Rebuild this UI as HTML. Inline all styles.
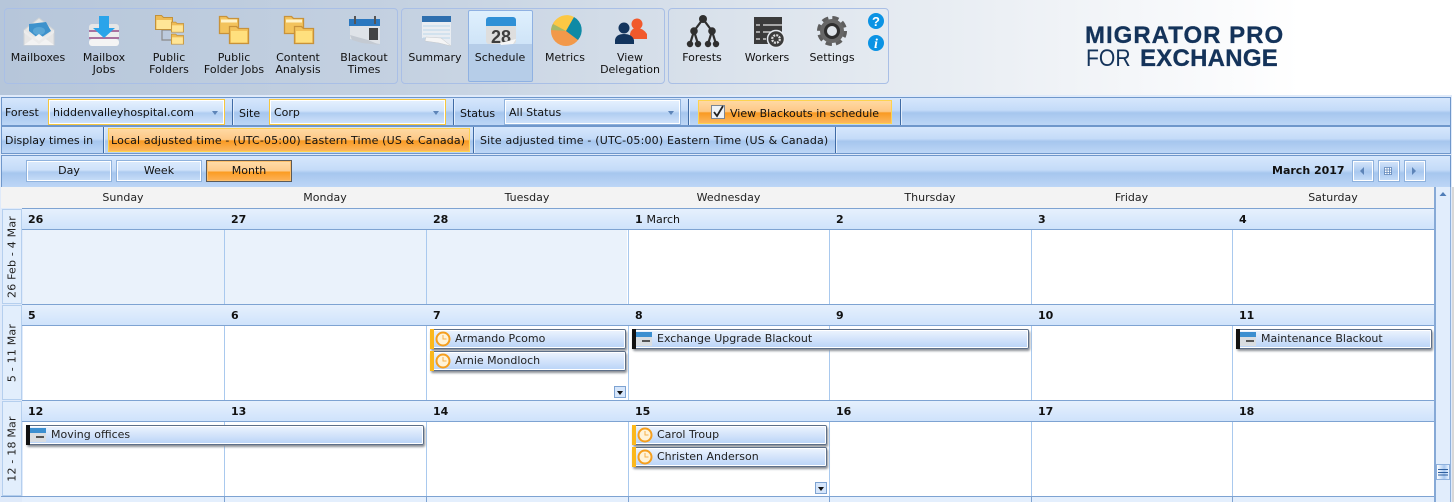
<!DOCTYPE html>
<html><head><meta charset="utf-8"><style>
html,body{margin:0;padding:0;width:1456px;height:502px;overflow:hidden;background:#fff}
body{position:relative;font:11px "DejaVu Sans","Liberation Sans",sans-serif;color:#111}
div,span{position:absolute;box-sizing:border-box;white-space:nowrap}
#hd{left:0;top:0;width:1456px;height:95px;background:linear-gradient(90deg,#b6c6da 0,#c4d1e1 400px,#dfe6ee 800px,#f4f6f9 1130px,#fff 1300px)}
.grp{top:8px;height:76px;border:1px solid #a9bfe6;border-radius:4px}
.l{text-align:center;line-height:12px;font-size:11px;color:#111;width:80px}
.tb{left:1px;width:1450px;border:1px solid #6f97cb;background:linear-gradient(#d6e7fc 0,#c4dbf8 45%,#a6c6ee 55%,#bdd6f6 100%)}
.sep{width:1px;background:#3f6ba5;box-shadow:1px 0 0 #e3eefc}
.t{line-height:13px;font-size:11px}
.cb{top:100px;height:24px;border:1px solid #fff;outline:1px solid #f6c73e;outline-offset:0;background:linear-gradient(#e4f0fe 0,#d0e3fa 45%,#b0cdf1 55%,#cfe2fa 100%);padding:5px 3px 3px;line-height:13px;font-size:11px}
.cb i{position:absolute;right:5px;top:10px;border:3px solid transparent;border-top:4px solid #5d84b8;border-bottom:0}
.or{background:linear-gradient(#ffd9a3 0,#fdc885 48%,#f99a22 54%,#fcb65c 100%);border:1px solid #fdd34f}
.btn{top:160px;width:86px;height:22px;text-align:center;line-height:20px;border:1px solid #8fb2dd;outline:1px solid #fff;outline-offset:-2px;background:linear-gradient(#dbeafd 0,#cfe2fa 45%,#aecbf0 55%,#c8def8 100%)}
.nb{top:160px;width:22px;height:22px;border:1px solid #8fb2dd;outline:1px solid #fff;outline-offset:-2px;background:linear-gradient(#d6e6fb,#a9c8ef 55%,#c8def8)}
.dn{top:187px;height:21px;text-align:center;line-height:22px;font-size:11px;background:#f3f3f3;color:#222}
.dh{height:22px;background:linear-gradient(#e6f0fd,#cfe3fb);border-top:1px solid #7ea3d2;border-bottom:1px solid #7ea3d2;font-weight:bold;padding:4px 0 0 6px;line-height:14px;font-size:11px;color:#111}
.dh b{font-weight:normal}
.vl{width:1px;background:#a9c9ee}
.hl{height:1px;background:#7ea3d2}
.wk{left:2px;width:20px;height:95px;background:#e2eefc;border:1px solid #b5cfee}
.wk span{left:50%;top:50%;transform:translate(-50%,-50%) rotate(-90deg);font-size:11px;color:#222;letter-spacing:.2px}
.ev{height:20px;border:1px solid #5d6f88;border-radius:2px;background:linear-gradient(#edf4fe,#b9d3f7);box-shadow:1px 2px 2px #8b8f96;outline:1px solid #fff;outline-offset:-2px;line-height:17px;font-size:11px;color:#222}
.ev u{position:absolute;left:-1px;top:-1px;bottom:-1px;width:4px;text-decoration:none}
.ev span{left:24px;top:0}
.ev svg{position:absolute;left:3px;top:1px}
.ev.c svg{left:4px}
.mr{width:12px;height:12px;border:1px solid #7ea3d2;background:#d6e6fb}
.mr i{position:absolute;left:2px;top:4px;border:3px solid transparent;border-top:4px solid #111;border-bottom:0}
.lg{color:#14335a;font-family:"Liberation Sans",sans-serif;font-size:24px;line-height:25px}
</style></head><body>
<div id="hd"></div>
<div class="grp" style="left:4px;width:394px"></div>
<div class="grp" style="left:401px;width:264px"></div>
<div class="grp" style="left:668px;width:221px"></div>
<div style="left:468px;top:10px;width:65px;height:72px;border:1px solid #8fb1e2;border-radius:2px;background:linear-gradient(#dff0fd 0,#cfe4f8 47%,#b6cde8 47%,#b6cde8 100%)"></div>

<svg style="position:absolute;left:0;top:0" width="900" height="95" viewBox="0 0 900 95">
<defs>
<g id="f"><path d="M.5 1.500h6l2 2h9v12H.5z" fill="#eebb55" stroke="#c2913a"/><path d="M1.500 6h15v9h-15z" fill="#ffe596"/></g>
<g id="F2"><path d="M.5 2.500h7l2 2h10v15H.5z" fill="#f3c35c" stroke="#c8923a" stroke-width="1.300"/><path d="M2 5.500h16v3H2z" fill="#fff3c8"/><path d="M10.500 12.500h7l2 2h10v15h-19z" fill="#f3c35c" stroke="#c8923a" stroke-width="1.300"/><path d="M12 17h16v11.500H12z" fill="#ffe07e"/></g>
</defs>
<!-- mailbox -->
<path d="M24 30 39 18l15 12v15H24z" fill="#e6e6e6" stroke="#cfd3d6"/><path d="M29 24l17-2 5 9-12 8-10-8z" fill="#3e92cc"/><ellipse cx="39" cy="31" rx="6" ry="4" fill="#5aa6d6"/><path d="M24 45l15-11 15 11z" fill="#f3f3f3"/><path d="M24 30l15 11 15-11v3L39 44 24 33z" fill="#ececec"/>
<!-- jobs -->
<rect x="89" y="24" width="30" height="8" rx="3" fill="#e6e6e6"/><rect x="89" y="30" width="30" height="2" fill="#a9719f"/><rect x="89" y="32" width="30" height="7" fill="#ededed"/><rect x="89" y="37" width="30" height="2" fill="#a9719f"/><rect x="89" y="39" width="30" height="7" rx="3" fill="#f4f4f4"/>
<path d="M99 16h10v12h6l-11 10-11-10h6z" fill="#2aa4ea"/>
<!-- public folders -->
<path d="M162 26v14h10M162 30h10" fill="none" stroke="#8a8a8a" stroke-width="1.200"/>
<use href="#f" transform="translate(155 14)"/><use href="#f" transform="translate(171 21) scale(.72)"/><use href="#f" transform="translate(171 33) scale(.72)"/>
<!-- folders -->
<use href="#F2" transform="translate(219 14)"/><use href="#F2" transform="translate(284 14)"/>
<!-- blackout -->
<path d="M350 20h30v24l-12-2-18-3z" fill="#dfe3e8"/><path d="M350 35l18 5 12 5-18-2-10-3z" fill="#c4cad2"/><rect x="349" y="19" width="31" height="7" fill="#2b78bf"/><rect x="369" y="28" width="9" height="12" fill="#444"/><rect x="354" y="16" width="2" height="8" fill="#555"/><rect x="374" y="16" width="2" height="8" fill="#555"/>
<!-- summary -->
<path d="M422 16h29v30l-10-5-14-2-5-1z" fill="#e9edf2"/><rect x="422" y="16" width="29" height="6" fill="#2f6fae"/><g stroke="#bcd6ea"><path d="M423 26h27M423 30h27M423 34h27M423 38h27"/></g><path d="M426 37l15 1 10 8-12-3-14-2z" fill="#f5f5f5" stroke="#c6c9cc" stroke-width=".5"/>
<!-- schedule -->
<rect x="486" y="17" width="30" height="27" rx="3" fill="#dedede"/><path d="M486 20a3 3 0 0 1 3-3h24a3 3 0 0 1 3 3v6h-30z" fill="#2f90d6"/><text x="501" y="43" text-anchor="middle" font-family="Liberation Sans" font-weight="bold" font-size="18" fill="#3d3d3d">28</text><path d="M500 43l16-4-3 5-12 1z" fill="#f6f6f6"/>
<!-- metrics -->
<circle cx="566" cy="31" r="15" fill="#f2994a"/><path d="M566 31l-13-7a15 15 0 0 1 21-7z" fill="#fcc844"/><path d="M566 31l8-14a15 15 0 0 1 4 23z" fill="#0f8aa5"/><path d="M566 31l-13-7a15 15 0 0 0-2 6z" fill="#a5b968"/>
<!-- delegation -->
<circle cx="637" cy="24" r="5.500" fill="#f1592c"/><path d="M630 39v-5q1-6 7-6t10 6v5z" fill="#f1592c"/><circle cx="624" cy="28" r="5.500" fill="#12345d"/><path d="M615 44v-4q1-6 9-6t10 6v4z" fill="#12345d"/>
<!-- forests -->
<g stroke="#2f2f2f" stroke-width="2.200" fill="none"><path d="M703 19l-9 12-4 13M703 19l9 12 4 13M694 31l4 13M712 31l-4 13"/></g><g fill="#2f2f2f"><circle cx="703" cy="19" r="4"/><circle cx="694" cy="31" r="3.800"/><circle cx="712" cy="31" r="3.800"/><circle cx="690" cy="44" r="3.200"/><circle cx="698" cy="44" r="3.200"/><circle cx="708" cy="44" r="3.200"/><circle cx="716" cy="44" r="3.200"/></g>
<!-- workers -->
<rect x="754" y="17" width="28" height="27" fill="#3b3b3b"/><path d="M756 25h4M763 25h19M756 32h4M763 32h8M756 39h4M763 39h3" stroke="#e6e6e6" stroke-width="1.300"/><circle cx="776" cy="39" r="8.500" fill="#3b3b3b" stroke="#e6eaf0" stroke-width="1.500"/><circle cx="776" cy="39" r="3.800" fill="none" stroke="#ddd" stroke-width="2.200" stroke-dasharray="2 1"/>
<!-- settings -->
<circle cx="832" cy="31" r="13" fill="none" stroke="#5e5e5e" stroke-width="4" stroke-dasharray="6.200 4"/><circle cx="832" cy="31" r="12" fill="#676767"/><circle cx="832" cy="31" r="8" fill="#2e2e2e"/><circle cx="832" cy="31" r="5" fill="#dfe4ea"/>
<!-- help -->
<circle cx="876" cy="21" r="8" fill="#0b93e4"/><text x="876" y="26" text-anchor="middle" font-family="Liberation Sans" font-weight="bold" font-size="13" fill="#fff">?</text>
<circle cx="876" cy="43" r="8" fill="#0b93e4"/><text x="876" y="48" text-anchor="middle" font-family="Liberation Serif" font-weight="bold" font-style="italic" font-size="14" fill="#fff">i</text>
</svg>

<div class="l" style="left:-2px;top:52px">Mailboxes</div>
<div class="l" style="left:64px;top:52px">Mailbox<br>Jobs</div>
<div class="l" style="left:129px;top:52px">Public<br>Folders</div>
<div class="l" style="left:194px;top:52px">Public<br>Folder Jobs</div>
<div class="l" style="left:258px;top:52px">Content<br>Analysis</div>
<div class="l" style="left:324px;top:52px">Blackout<br>Times</div>
<div class="l" style="left:395px;top:52px">Summary</div>
<div class="l" style="left:460px;top:52px">Schedule</div>
<div class="l" style="left:525px;top:52px">Metrics</div>
<div class="l" style="left:590px;top:52px">View<br>Delegation</div>
<div class="l" style="left:662px;top:52px">Forests</div>
<div class="l" style="left:727px;top:52px">Workers</div>
<div class="l" style="left:792px;top:52px">Settings</div>

<div class="lg" style="left:1085px;top:23px;font-weight:bold;letter-spacing:1px;-webkit-text-stroke:.3px #14335a">MIGRATOR PRO</div>
<div class="lg" style="left:1086px;top:46px;transform:scaleX(.88);transform-origin:0 0">FOR</div>
<div class="lg" style="left:1140px;top:46px;font-weight:bold;letter-spacing:.25px;-webkit-text-stroke:.3px #14335a">EXCHANGE</div>

<div style="left:0;top:95px;width:1456px;height:3px;background:#a8c7ed"></div>
<div style="left:0;top:95px;width:1452px;height:407px;background:#dfeafa"></div>
<div style="left:1452px;top:95px;width:4px;height:407px;background:#fff"></div>
<div class="tb" style="top:97px;height:29px"></div>
<div class="tb" style="top:126px;height:28px"></div>
<div class="tb" style="top:155px;height:33px"></div>

<div class="t" style="left:5px;top:106px">Forest</div>
<div class="cb" style="left:49px;width:175px">hiddenvalleyhospital.com<i></i></div>
<div class="sep" style="left:232px;top:99px;height:26px"></div>
<div class="t" style="left:239px;top:107px">Site</div>
<div class="cb" style="left:270px;width:175px">Corp<i></i></div>
<div class="sep" style="left:453px;top:99px;height:26px"></div>
<div class="t" style="left:460px;top:107px">Status</div>
<div class="cb" style="left:505px;width:175px;outline-color:#8fb2dd">All Status<i></i></div>
<div class="sep" style="left:688px;top:99px;height:26px"></div>
<div class="or" style="left:698px;top:100px;width:194px;height:24px"></div>
<div style="left:711px;top:105px;width:14px;height:14px;background:#eef2f7;border:1px solid #7a8594"></div>
<svg style="position:absolute;left:711px;top:104px" width="15" height="15"><path d="M3 8l3 4 6-10" fill="none" stroke="#222" stroke-width="1.800"/></svg>
<div class="t" style="left:730px;top:107px">View Blackouts in schedule</div>
<div class="sep" style="left:900px;top:99px;height:26px"></div>

<div class="t" style="left:5px;top:134px">Display times in</div>
<div class="sep" style="left:103px;top:127px;height:26px"></div>
<div class="or" style="left:108px;top:128px;width:362px;height:24px"></div>
<div class="t" style="left:111px;top:134px;letter-spacing:.15px">Local adjusted time - (UTC-05:00) Eastern Time (US &amp; Canada)</div>
<div class="sep" style="left:473px;top:127px;height:26px"></div>
<div class="t" style="left:480px;top:134px;letter-spacing:.18px">Site adjusted time - (UTC-05:00) Eastern Time (US &amp; Canada)</div>
<div class="sep" style="left:835px;top:127px;height:26px"></div>

<div class="btn" style="left:26px">Day</div>
<div class="btn" style="left:116px">Week</div>
<div class="btn" style="left:206px;border-color:#5a5a5a;outline-color:#fdbf6b;background:linear-gradient(#ffdcaa 0,#fdcb8b 50%,#fb9c22 55%,#fcb35a 100%)">Month</div>
<div class="t" style="left:1272px;top:164px;font-weight:bold">March 2017</div>
<div class="nb" style="left:1352px"></div><div class="nb" style="left:1378px"></div><div class="nb" style="left:1404px"></div>
<svg style="position:absolute;left:1352px;top:160px" width="76" height="22"><path d="M8 11l4-4v8z" fill="#5d84b8"/><path d="M60 7l4 4-4 4z" fill="#5d84b8"/><path d="M32.500 7.500h7v7h-7zM32.500 10h7M32.500 12.500h7M35 7.500v7M37.500 7.500v7" fill="#fff" stroke="#5d84b8" stroke-width=".8"/></svg>

<div class="dn" style="left:1px;width:1434px"></div>
<div class="dn" style="left:22px;width:202px">Sunday</div>
<div class="dn" style="left:224px;width:202px">Monday</div>
<div class="dn" style="left:426px;width:202px">Tuesday</div>
<div class="dn" style="left:628px;width:201px">Wednesday</div>
<div class="dn" style="left:829px;width:202px">Thursday</div>
<div class="dn" style="left:1031px;width:201px">Friday</div>
<div class="dn" style="left:1232px;width:202px">Saturday</div>

<div style="left:23px;top:208px;width:1411px;height:294px;background:#fff"></div>
<div style="left:23px;top:230px;width:604px;height:74px;background:#eaf2fb"></div>
<div class="vl" style="left:224px;top:208px;height:294px"></div>
<div class="vl" style="left:426px;top:208px;height:294px"></div>
<div class="vl" style="left:628px;top:208px;height:294px"></div>
<div class="vl" style="left:829px;top:208px;height:294px"></div>
<div class="vl" style="left:1031px;top:208px;height:294px"></div>
<div class="vl" style="left:1232px;top:208px;height:294px"></div>

<div class="dh" style="left:22px;top:208px;width:203px">26</div>
<div class="dh" style="left:225px;top:208px;width:202px">27</div>
<div class="dh" style="left:427px;top:208px;width:202px">28</div>
<div class="dh" style="left:629px;top:208px;width:201px">1 <b>March</b></div>
<div class="dh" style="left:830px;top:208px;width:202px">2</div>
<div class="dh" style="left:1032px;top:208px;width:201px">3</div>
<div class="dh" style="left:1233px;top:208px;width:201px">4</div>

<div class="dh" style="left:22px;top:304px;width:203px">5</div>
<div class="dh" style="left:225px;top:304px;width:202px">6</div>
<div class="dh" style="left:427px;top:304px;width:202px">7</div>
<div class="dh" style="left:629px;top:304px;width:201px">8</div>
<div class="dh" style="left:830px;top:304px;width:202px">9</div>
<div class="dh" style="left:1032px;top:304px;width:201px">10</div>
<div class="dh" style="left:1233px;top:304px;width:201px">11</div>

<div class="dh" style="left:22px;top:400px;width:203px">12</div>
<div class="dh" style="left:225px;top:400px;width:202px">13</div>
<div class="dh" style="left:427px;top:400px;width:202px">14</div>
<div class="dh" style="left:629px;top:400px;width:201px">15</div>
<div class="dh" style="left:830px;top:400px;width:202px">16</div>
<div class="dh" style="left:1032px;top:400px;width:201px">17</div>
<div class="dh" style="left:1233px;top:400px;width:201px">18</div>

<div class="hl" style="left:1px;top:496px;width:1433px"></div>
<div style="left:22px;top:497px;width:1412px;height:5px;background:#e4effd"></div>
<div class="vl" style="left:224px;top:496px;height:6px;background:#7ea3d2"></div>
<div class="vl" style="left:426px;top:496px;height:6px;background:#7ea3d2"></div>
<div class="vl" style="left:628px;top:496px;height:6px;background:#7ea3d2"></div>
<div class="vl" style="left:829px;top:496px;height:6px;background:#7ea3d2"></div>
<div class="vl" style="left:1031px;top:496px;height:6px;background:#7ea3d2"></div>
<div class="vl" style="left:1232px;top:496px;height:6px;background:#7ea3d2"></div>

<div class="wk" style="top:209px"><span>26 Feb - 4 Mar</span></div>
<div class="wk" style="top:305px"><span>5 - 11 Mar</span></div>
<div class="wk" style="top:401px"><span>12 - 18 Mar</span></div>

<div class="ev c" style="left:430px;top:329px;width:196px"><u style="background:#fbb81c"></u><svg width="16" height="16"><circle cx="8" cy="8" r="6.500" fill="#fff3d8" stroke="#f59f1e" stroke-width="2"/><path d="M8 4v4h3.500" fill="none" stroke="#f7b24a"/></svg><span>Armando Pcomo</span></div>
<div class="ev c" style="left:430px;top:351px;width:196px"><u style="background:#fbb81c"></u><svg width="16" height="16"><circle cx="8" cy="8" r="6.500" fill="#fff3d8" stroke="#f59f1e" stroke-width="2"/><path d="M8 4v4h3.500" fill="none" stroke="#f7b24a"/></svg><span>Arnie Mondloch</span></div>
<div class="ev" style="left:632px;top:329px;width:397px"><u style="background:#111"></u><svg width="16" height="16"><rect y="1" width="16" height="14" fill="#d9dde1"/><rect y="1" width="16" height="5" fill="#3c8fd0"/><rect x="6" y="9" width="8" height="2" fill="#555"/></svg><span>Exchange Upgrade Blackout</span></div>
<div class="ev" style="left:1236px;top:329px;width:196px"><u style="background:#111"></u><svg width="16" height="16"><rect y="1" width="16" height="14" fill="#d9dde1"/><rect y="1" width="16" height="5" fill="#3c8fd0"/><rect x="6" y="9" width="8" height="2" fill="#555"/></svg><span>Maintenance Blackout</span></div>
<div class="ev" style="left:26px;top:425px;width:398px"><u style="background:#111"></u><svg width="16" height="16"><rect y="1" width="16" height="14" fill="#d9dde1"/><rect y="1" width="16" height="5" fill="#3c8fd0"/><rect x="6" y="9" width="8" height="2" fill="#555"/></svg><span>Moving offices</span></div>
<div class="ev c" style="left:632px;top:425px;width:195px"><u style="background:#fbb81c"></u><svg width="16" height="16"><circle cx="8" cy="8" r="6.500" fill="#fff3d8" stroke="#f59f1e" stroke-width="2"/><path d="M8 4v4h3.500" fill="none" stroke="#f7b24a"/></svg><span>Carol Troup</span></div>
<div class="ev c" style="left:632px;top:447px;width:195px"><u style="background:#fbb81c"></u><svg width="16" height="16"><circle cx="8" cy="8" r="6.500" fill="#fff3d8" stroke="#f59f1e" stroke-width="2"/><path d="M8 4v4h3.500" fill="none" stroke="#f7b24a"/></svg><span>Christen Anderson</span></div>
<div class="mr" style="left:614px;top:386px"><i></i></div>
<div class="mr" style="left:815px;top:482px"><i></i></div>

<div style="left:1434px;top:187px;width:2px;height:315px;background:#86a9d6"></div>
<div style="left:1436px;top:187px;width:14px;height:315px;background:#e1edfc"></div>
<div style="left:1450px;top:187px;width:1px;height:315px;background:#8fb1dc"></div>
<div style="left:1452px;top:187px;width:2px;height:315px;background:#d8d8d8"></div>
<svg style="position:absolute;left:1436px;top:190px" width="14" height="10"><path d="M3.500 6l3.500-4 3.500 4z" fill="#4f7db8"/></svg>
<div style="left:1436px;top:464px;width:14px;height:16px;border:1px solid #8fb1dc;background:linear-gradient(90deg,#fff,#a9c9f0 60%,#eaf3fe)"></div>
<svg style="position:absolute;left:1438px;top:468px" width="10" height="9"><path d="M0 1.500h10M0 4.500h10M0 7h10" stroke="#2e5f9f"/></svg>
</body></html>
